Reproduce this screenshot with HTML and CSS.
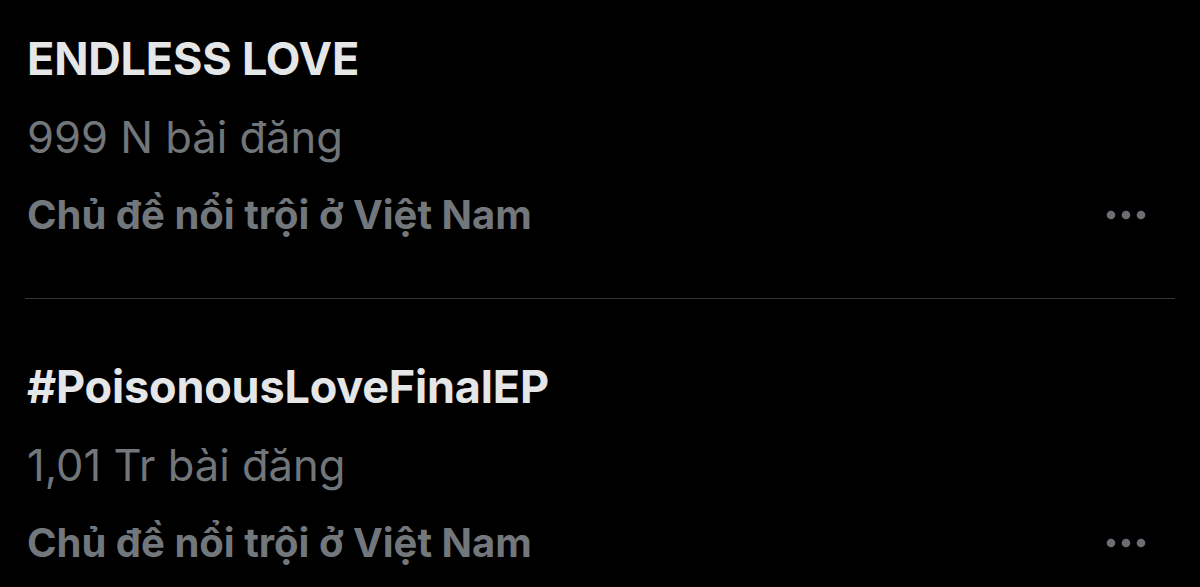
FILE: index.html
```html
<!DOCTYPE html>
<html lang="vi">
<head>
    <meta charset="UTF-8">
    <meta name="viewport" content="width=device-width, initial-scale=1.0">
    <title>Xu hướng</title>
    <link rel="stylesheet" href="styles.css">
</head>
<body>
    <div class="trend-list">
        <div class="trend">
            <div class="trend-text">
                <div class="trend-name">ENDLESS LOVE</div>
                <div class="trend-count">999 N bài đăng</div>
                <div class="trend-meta">Chủ đề nổi trội ở Việt Nam</div>
            </div>
            <svg class="more" viewBox="0 0 40 10" width="40" height="10">
                <circle cx="5" cy="5" r="4.3"/>
                <circle cx="20" cy="5" r="4.3"/>
                <circle cx="35" cy="5" r="4.3"/>
            </svg>
        </div>
        <div class="trend">
            <div class="trend-text">
                <div class="trend-name">#PoisonousLoveFinalEP</div>
                <div class="trend-count">1,01 Tr bài đăng</div>
                <div class="trend-meta">Chủ đề nổi trội ở Việt Nam</div>
            </div>
            <svg class="more" viewBox="0 0 40 10" width="40" height="10">
                <circle cx="5" cy="5" r="4.3"/>
                <circle cx="20" cy="5" r="4.3"/>
                <circle cx="35" cy="5" r="4.3"/>
            </svg>
        </div>
    </div>
</body>
</html>
```

FILE: styles.css
```css
body {
    margin: 0;
    background: #000;
    font-family: Inter, "Noto Sans", sans-serif;
    height: 100vh;
    overflow: hidden;
}
.trend-list {
    padding: 20px 25px 0 25px;
}
.trend {
    display: flex;
    align-items: flex-end;
    justify-content: space-between;
}
.trend:first-child {
    padding-bottom: 44px;
    border-bottom: 1px solid #333639;
}
.trend + .trend {
    padding-top: 49px;
}
.trend-text {
    padding-left: 2px;
}
.trend-text div {
    line-height: 78px;
    white-space: nowrap;
}
.trend-name {
    color: #e4e6e7;
    font-size: 45px;
    font-weight: 700;
    letter-spacing: -0.2px;
}
.trend-count {
    color: #71767b;
    font-size: 43.5px;
}
.trend-meta {
    color: #72777c;
    font-size: 40px;
    font-weight: 700;
}
/* the "more" button sits on the same line as the meta text */
.more {
    fill: #6b6f73;
    margin: 0 29px 34px 0;
}
```
